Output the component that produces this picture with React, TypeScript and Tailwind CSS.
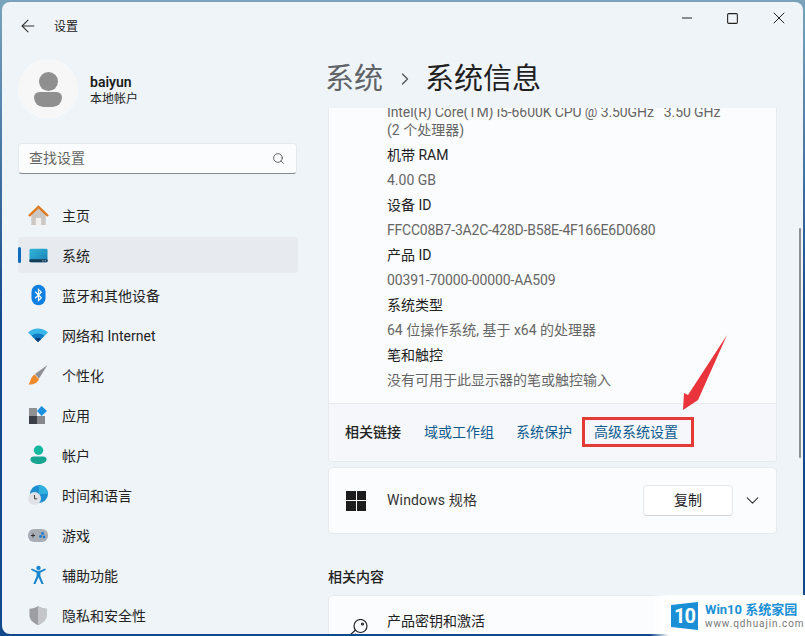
import { ArrowLeft, ChevronDown, ChevronRight, Minus, Search, Square, X } from "lucide-react";

const specs = [
  { label: "机带 RAM", value: "4.00 GB", tight: "" },
  { label: "设备 ID", value: "FFCC08B7-3A2C-428D-B58E-4F166E6D0680", tight: "tracking-[-0.22px]" },
  { label: "产品 ID", value: "00391-70000-00000-AA509", tight: "tracking-[-0.13px]" },
  { label: "系统类型", value: "64 位操作系统, 基于 x64 的处理器", tight: "" },
  { label: "笔和触控", value: "没有可用于此显示器的笔或触控输入", tight: "" },
];

const HomeIcon = () => (
  <svg viewBox="0 0 22 22" className="w-[21px] h-[21px]">
    <path d="M3.5 10 L11 3.5 L18.5 10 V21 H3.5 Z" fill="#c9c6c3" />
    <rect x="8.2" y="13.5" width="5.6" height="7.5" fill="#f0f0f0" />
    <path d="M1 11.5 L11 2 L21 11.5" fill="none" stroke="#e0761a" strokeWidth="2.4" />
  </svg>
);

const SystemIcon = () => (
  <svg viewBox="0 0 20 15" className="w-[19px] h-[15px]">
    <defs>
      <linearGradient id="sys" x1="0" y1="0" x2="1" y2="1">
        <stop offset="0" stopColor="#2fb5d8" />
        <stop offset="1" stopColor="#1a7fb5" />
      </linearGradient>
    </defs>
    <rect x="0.5" y="0.5" width="19" height="14" rx="1.5" fill="url(#sys)" />
    <rect x="0.5" y="11.5" width="19" height="3" rx="1" fill="#163c58" />
    <rect x="14" y="12.6" width="1.2" height="1" fill="#cfe6f2" />
    <rect x="16.5" y="12.6" width="1.2" height="1" fill="#cfe6f2" />
  </svg>
);

const BluetoothIcon = () => (
  <svg viewBox="0 0 16 22" className="w-[15px] h-[22px]">
    <rect x="0.5" y="0" width="15" height="22" rx="7.5" fill="#0f7fe0" />
    <path d="M4.5 7.5 L11 14 L8 17 V5 L11 8 L4.5 14.5" fill="none" stroke="#fff" strokeWidth="1.3" />
  </svg>
);

const WifiIcon = () => (
  <svg viewBox="0 0 20 14" className="w-[20px] h-[14px]">
    <path d="M0 4.5 C5.5 -1 14.5 -1 20 4.5 L10 14 Z" fill="#38b6e8" />
    <path d="M3.5 7.8 C7 4.6 13 4.6 16.5 7.8 L10 14 Z" fill="#0f7cc4" />
    <path d="M6.8 10.9 C8.6 9.4 11.4 9.4 13.2 10.9 L10 14 Z" fill="#0b3f78" />
  </svg>
);

const BrushIcon = () => (
  <svg viewBox="0 0 20 20" className="w-[20px] h-[20px]">
    <path d="M19.5 0 L7 9 L11 13.5 Z" fill="#8d8f94" />
    <path d="M6.5 9.5 L11 14 C9.5 18.5 5 19.8 0.5 19.5 C2.5 17 2.5 12 6.5 9.5 Z" fill="#ee8a2c" />
  </svg>
);

const AppsIcon = () => (
  <svg viewBox="0 0 18 18" className="w-[18px] h-[18px]">
    <rect x="0" y="2" width="8" height="8" fill="#8f9094" />
    <rect x="0" y="10" width="8" height="8" fill="#3c3f46" />
    <rect x="8" y="10" width="8" height="8" fill="#85878c" />
    <path d="M12.5 0 L18 5 L12.5 10 L8 5 Z" fill="#1b8fe0" />
  </svg>
);

const AccountIcon = () => (
  <svg viewBox="0 0 18 20" className="w-[17px] h-[20px]">
    <circle cx="9" cy="5" r="5" fill="#14b8a0" />
    <path d="M0.5 14.5 C0.5 12.5 2 11.5 4 11.5 H14 C16 11.5 17.5 12.5 17.5 14.5 C17.5 18 13 19.5 9 19.5 C5 19.5 0.5 18 0.5 14.5 Z" fill="#17a592" />
  </svg>
);

const TimeIcon = () => (
  <svg viewBox="0 0 20 20" className="w-[20px] h-[20px]">
    <circle cx="11" cy="9" r="9" fill="#1d8fd0" />
    <path d="M11 0 C16 0 20 4 20 9 H11 Z" fill="#2fb0de" />
    <circle cx="6.5" cy="13.5" r="6.5" fill="#dfe1e6" />
    <path d="M6.5 10 V13.8 H9.2" fill="none" stroke="#444" strokeWidth="1" />
  </svg>
);

const GameIcon = () => (
  <svg viewBox="0 0 20 13" className="w-[20px] h-[13px]">
    <rect x="0" y="0" width="20" height="13" rx="6" fill="#a9adb5" />
    <path d="M3 6.5 H7 M5 4.5 V8.5" stroke="#333" strokeWidth="1" />
    <circle cx="14.5" cy="4.5" r="1.4" fill="#1e78c8" />
    <circle cx="12.5" cy="7.5" r="1.4" fill="#1e78c8" />
    <circle cx="16" cy="8" r="1.4" fill="#1e78c8" />
  </svg>
);

const AccessIcon = () => (
  <svg viewBox="0 0 18 20" className="w-[17px] h-[20px]">
    <circle cx="9" cy="2.5" r="2.3" fill="#1a86cc" />
    <path d="M1 4.5 L7 7.5 V11 L3.5 19.5 H5.8 L9 12.5 L12.2 19.5 H14.5 L11 11 V7.5 L17 4.5 L16 3 L10.5 5.5 H7.5 L2 3 Z" fill="#1a86cc" />
  </svg>
);

const ShieldIcon = () => (
  <svg viewBox="0 0 18 20" className="w-[18px] h-[19px]">
    <path d="M9 0 C11.5 2 15 2.8 18 3 V10 C18 15 13 18.5 9 20 C5 18.5 0 15 0 10 V3 C3 2.8 6.5 2 9 0 Z" fill="#9b9ea2" />
    <path d="M9 0 C11.5 2 15 2.8 18 3 V10 C18 15 13 18.5 9 20 Z" fill="#c4c6c9" />
  </svg>
);

const navItems = [
  { label: "主页", icon: <HomeIcon /> },
  { label: "系统", icon: <SystemIcon />, active: true },
  { label: "蓝牙和其他设备", icon: <BluetoothIcon /> },
  { label: "网络和 Internet", icon: <WifiIcon /> },
  { label: "个性化", icon: <BrushIcon /> },
  { label: "应用", icon: <AppsIcon /> },
  { label: "帐户", icon: <AccountIcon /> },
  { label: "时间和语言", icon: <TimeIcon /> },
  { label: "游戏", icon: <GameIcon /> },
  { label: "辅助功能", icon: <AccessIcon /> },
  { label: "隐私和安全性", icon: <ShieldIcon /> },
];

export default function App() {
  return (
    <div className="relative w-[805px] h-[636px] overflow-hidden bg-linear-to-b from-[#7aa3bb] to-[#12498c] to-50% font-['Roboto','Noto_Sans_CJK_SC',sans-serif]">
      <div className="relative flex h-[632px] w-[801px] mt-[2px] ml-[2px] bg-[#eff4f9] rounded-lg overflow-hidden">
        {/* sidebar */}
        <aside className="w-[308px] shrink-0 flex flex-col pl-4">
          <div className="flex items-center h-[48px] text-[#222]">
            <ArrowLeft className="w-[20px] h-[20px] text-[#333]" strokeWidth={1.3} />
            <span className="ml-[16px] text-[12px] mt-[1px]">设置</span>
          </div>
          <div className="flex items-center mt-[9px] h-[60px]">
            <div className="w-[60px] h-[60px] rounded-full bg-[#f7f7f7] flex flex-col items-center justify-center">
              <div className="w-[19px] h-[19px] rounded-full bg-[#8f8f8f]" />
              <div className="w-[28px] h-[15px] mt-[1px] rounded-b-[14px] rounded-t-[8px] bg-[#8f8f8f]" />
            </div>
            <div className="ml-[12px] flex flex-col mt-[2px]">
              <span className="text-[14px] leading-[18px] font-semibold text-[#1b1b1b]">baiyun</span>
              <span className="text-[12px] leading-[16px] text-[#222]">本地帐户</span>
            </div>
          </div>
          <div className="mt-[24px] w-[279px] h-[31px] flex items-center justify-between pl-[10px] pr-[11px] bg-[#fbfcfd] rounded border border-[#e6e8eb] border-b-[#85888c]">
            <span className="text-[14px] text-[#666]">查找设置</span>
            <Search className="w-[13px] h-[13px] text-[#444]" strokeWidth={1.5} />
          </div>
          <nav className="mt-[23px] flex flex-col w-[280px] gap-[4px]">
            {navItems.map((item) => (
              <div
                key={item.label}
                className={`relative flex items-center h-[36px] rounded ${item.active ? "bg-[#e7ebf0]" : ""}`}
              >
                {item.active && <div className="absolute left-0 top-[10px] h-[16px] w-[3px] rounded bg-[#0f6cbd]" />}
                <div className="w-[44px] pr-[4px] flex items-center justify-center shrink-0">{item.icon}</div>
                <span className="text-[14px] text-[#222] pt-[2px]">{item.label}</span>
              </div>
            ))}
          </nav>
        </aside>

        {/* main */}
        <main className="relative flex-1 min-w-0 flex flex-col">
          <div className="flex justify-end items-center h-[30px] mt-[1px] text-[#222]">
            <Minus className="w-[16px] h-[16px] mr-[31px]" strokeWidth={1.5} />
            <Square className="w-[13px] h-[13px] mr-[30px]" strokeWidth={2} />
            <X className="w-[20px] h-[20px] mr-[14px]" strokeWidth={1.2} />
          </div>
          <div className="flex items-center h-[75px] pl-[15px] pt-[17px] text-[29px] leading-none">
            <span className="text-[#5f6368]">系统</span>
            <ChevronRight className="w-[20px] h-[20px] ml-[12px] mr-[10px] text-[#555]" strokeWidth={1.6} />
            <span className="text-[#1f1f1f]">系统信息</span>
          </div>

          <div className="flex-1 overflow-hidden pl-[18px] pr-[25px]">
            <div className="w-[449px] -mt-[5px] bg-[#fbfcfd] rounded-b border border-t-0 border-[#e7e9ec]">
              <div className="pl-[58px] pr-4 h-[300px] overflow-hidden">
                <div className="text-[14px] leading-[18px] text-[#666]">
                  <div className="h-[18px] whitespace-nowrap tracking-[-0.1px]">Intel(R) Core(TM) i5-6600K CPU @ 3.50GHz&nbsp;&nbsp;&nbsp;3.50 GHz</div>
                  <div className="h-[18px]">(2 个处理器)</div>
                </div>
                {specs.map((s) => (
                  <div key={s.label} className="mt-[7px]">
                    <div className="text-[14px] leading-[18px] text-[#222]">{s.label}</div>
                    <div className={`mt-[7px] text-[14px] leading-[18px] text-[#666] ${s.tight}`}>{s.value}</div>
                  </div>
                ))}
              </div>
              <div className="flex items-center h-[58px] pl-[16px] bg-[#f5f7fa] border-t border-[#e7e9ec] rounded-b text-[14px]">
                <span className="font-medium text-[#222]">相关链接</span>
                <span className="ml-[23px] text-[#0e5a8f]">域或工作组</span>
                <span className="ml-[22px] text-[#0e5a8f]">系统保护</span>
                <span className="ml-[22px] text-[#0e5a8f]">高级系统设置</span>
              </div>
            </div>

            <div className="mt-[5px] w-[449px] h-[67px] flex items-center pl-[17px] bg-[#fbfcfd] rounded border border-[#e7e9ec]">
              <div className="grid grid-cols-2 gap-[1px] w-[20px] h-[20px] shrink-0">
                <div className="bg-[#1d1d1d]" />
                <div className="bg-[#1d1d1d]" />
                <div className="bg-[#1d1d1d]" />
                <div className="bg-[#1d1d1d]" />
              </div>
              <span className="ml-[21px] text-[14px] text-[#333] tracking-[0.15px]">Windows 规格</span>
              <div className="ml-auto flex items-center">
                <div className="w-[90px] h-[31px] flex items-center justify-center bg-white rounded border border-[#e6e8eb] border-b-[#cfd1d4] text-[14px] text-[#222]">
                  复制
                </div>
                <ChevronDown className="ml-[9px] mr-[13px] w-[21px] h-[21px] text-[#333]" strokeWidth={1.3} />
              </div>
            </div>

            <div className="mt-[33px] text-[14px] leading-[20px] font-medium text-[#222]">相关内容</div>

            <div className="mt-[8px] w-[449px] h-[60px] flex pl-[17px] bg-[#fbfcfd] rounded border border-[#e7e9ec]">
              <svg viewBox="0 0 22 20" className="w-[22px] h-[20px] mt-[23px] shrink-0 text-[#222]" fill="none" stroke="currentColor" strokeWidth="1.2">
                <circle cx="14.5" cy="7" r="6.5" />
                <circle cx="16.5" cy="5" r="1" />
                <path d="M9.5 11 L2 18 V20 H5.5 V18 H7.5 V16 L10 15" />
              </svg>
              <div className="ml-[19px] mt-[15px] text-[14px] leading-[20px] text-[#222]">产品密钥和激活</div>
            </div>
          </div>

          {/* scrollbar */}
          <div className="absolute right-[2px] top-[226px] w-[2px] h-[230px] rounded bg-[#8b8d90]" />
        </main>
      </div>

      {/* tutorial marks over the screenshot */}
      <div className="absolute left-[582px] top-[417px] w-[112px] h-[30px] border-[3px] border-[#e53935]" />
      <svg className="absolute left-[680px] top-[333px] w-[50px] h-[80px]" viewBox="0 0 50 80">
        <path d="M47 2 L8 62 L4 60 L3 77 L18 67 Z" fill="#e8343a" />
      </svg>

      <div className="absolute right-0 bottom-0 w-[155px] h-[41px] bg-linear-to-r from-transparent to-white to-[12%] flex items-center pl-[21px]">
        <div className="relative w-[27px] h-[28px] flex items-center justify-center shrink-0">
          <svg viewBox="0 0 27 28" className="absolute inset-0 w-[27px] h-[28px]">
            <polygon points="0,3 27,0 27,28 0,25" fill="#1a8fd6" />
          </svg>
          <span className="relative text-white font-bold text-[20px] leading-none tracking-[-1px]">10</span>
        </div>
        <div className="ml-[7px] flex flex-col gap-[1px]">
          <span className="text-[13px] leading-[15px] font-bold text-[#1a8fd6] whitespace-nowrap">Win10 系统家园</span>
          <span className="text-[10px] leading-[12px] tracking-[0.9px] text-[#777] whitespace-nowrap">www.qdhuajin.com</span>
        </div>
      </div>
    </div>
  );
}
